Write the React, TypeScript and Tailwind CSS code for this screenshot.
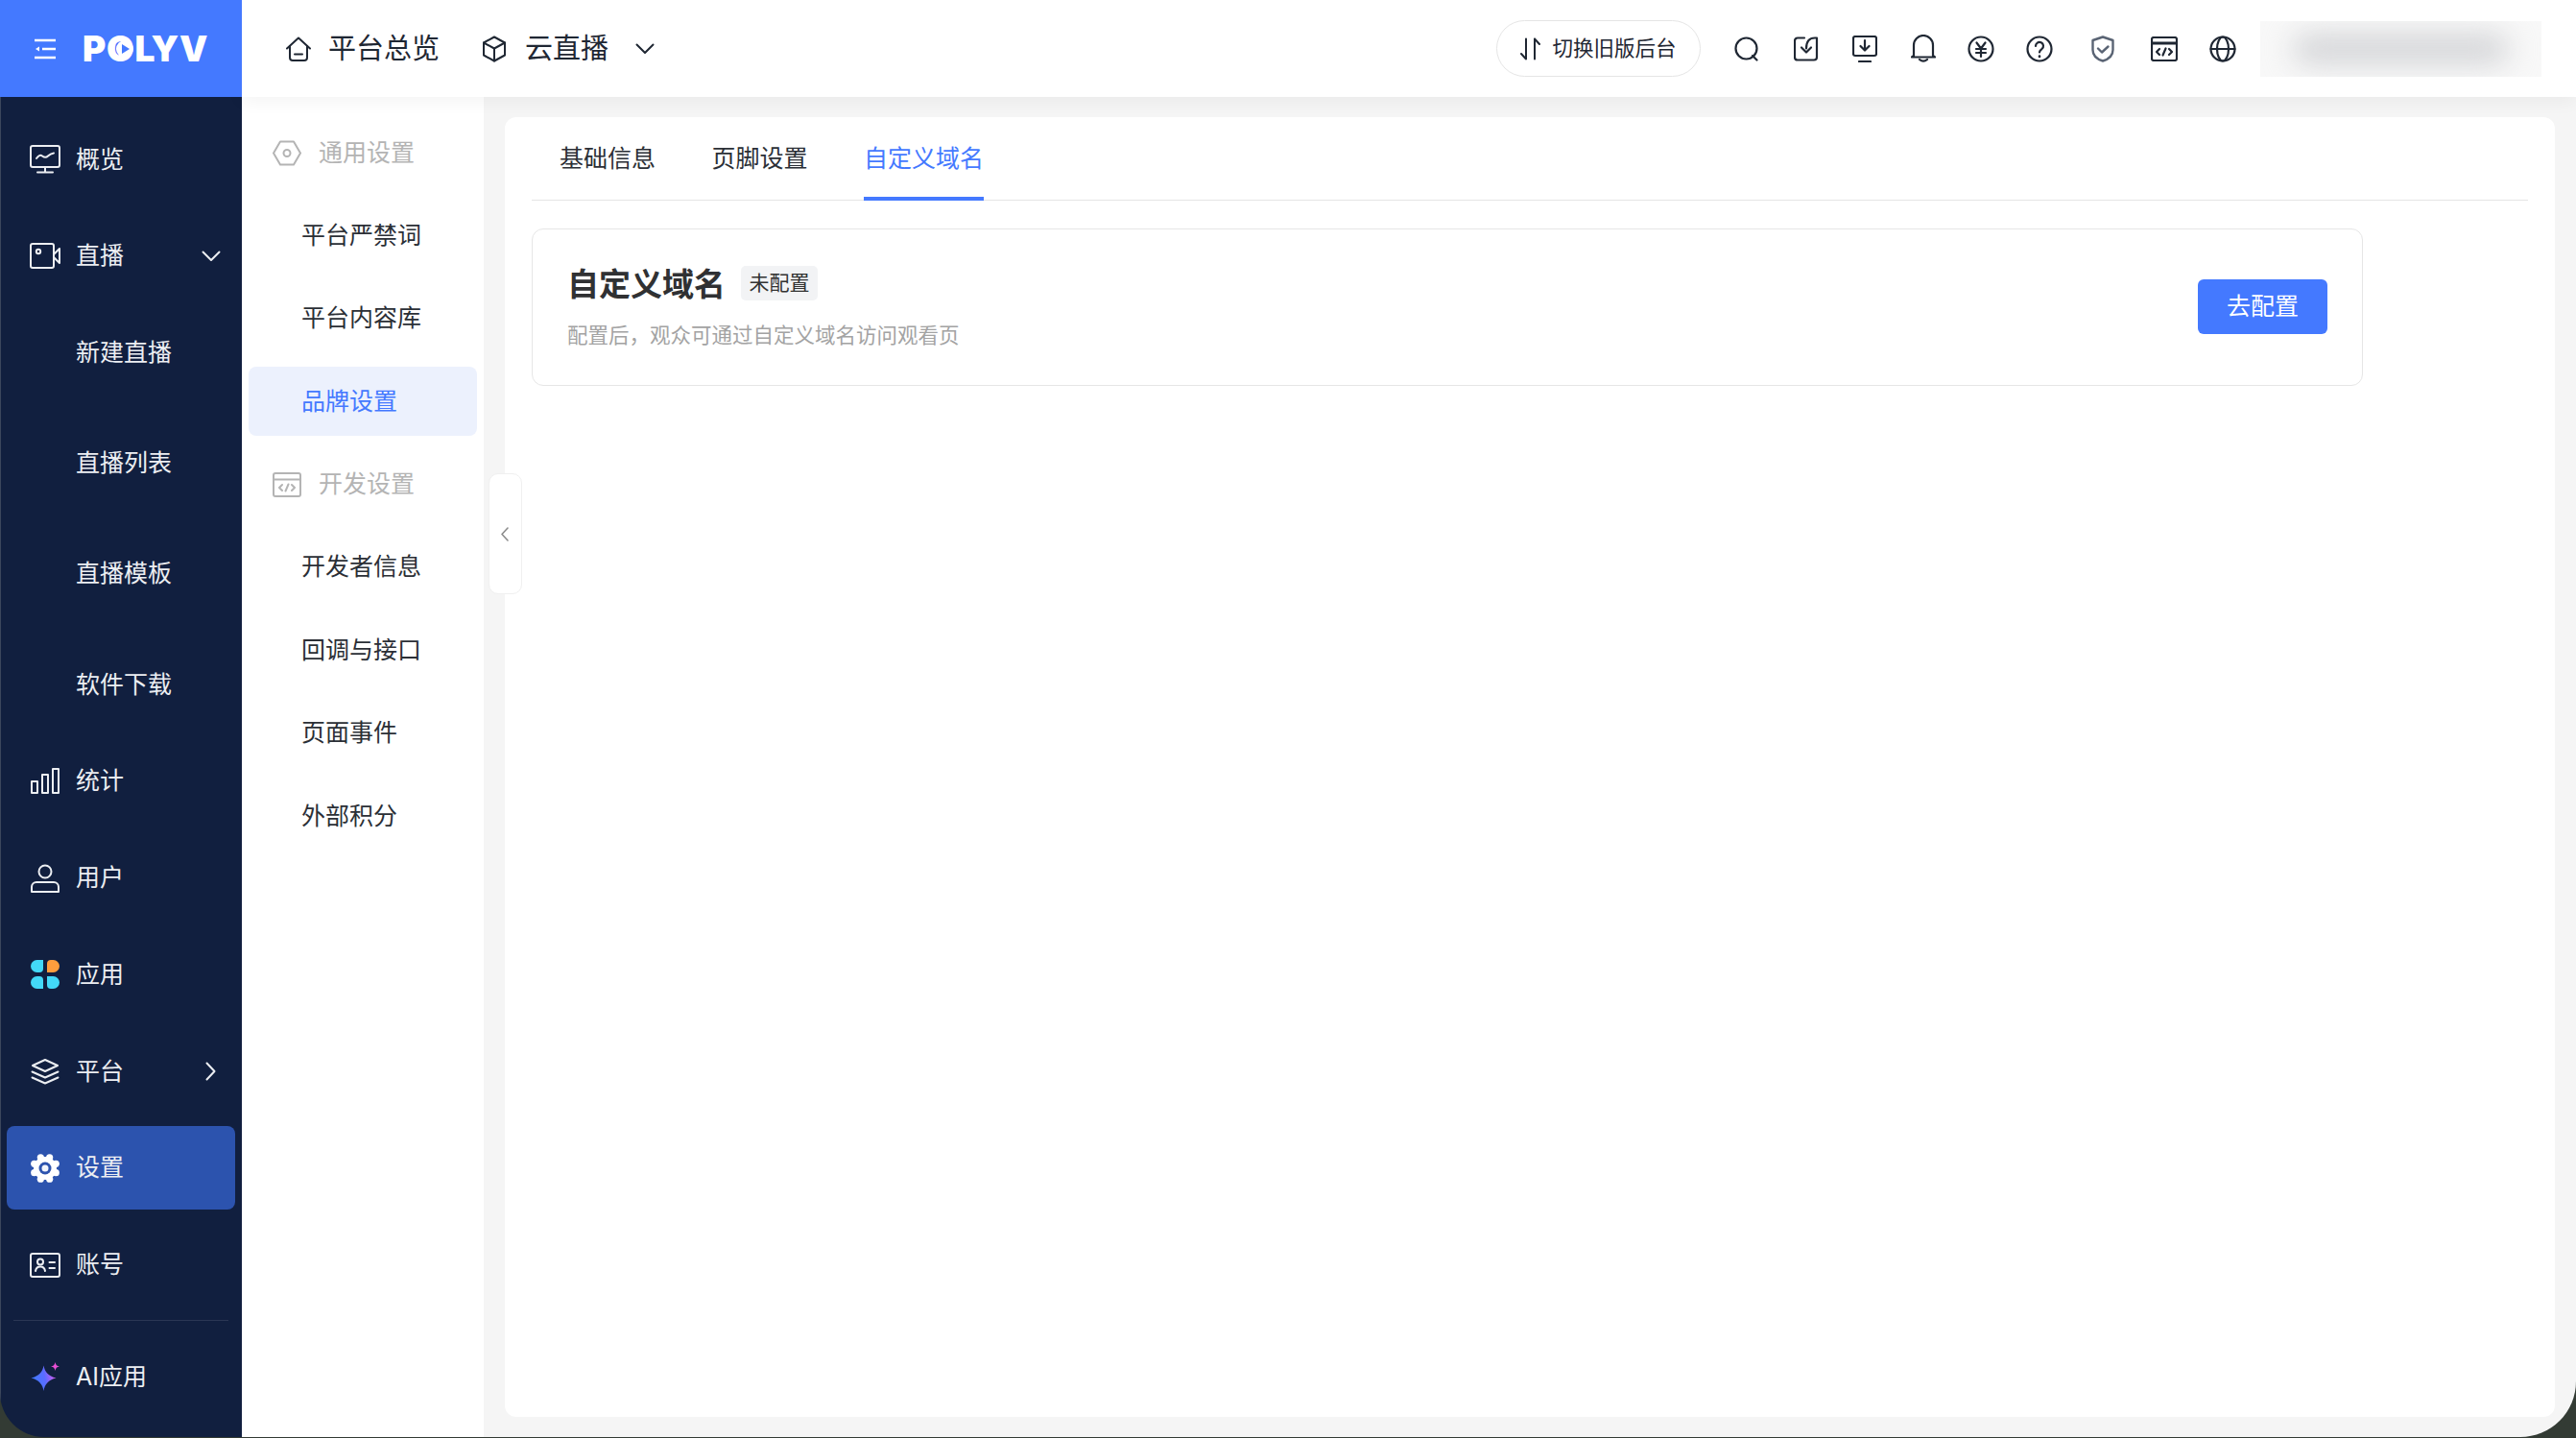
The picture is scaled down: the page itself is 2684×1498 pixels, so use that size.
import type { ReactNode } from 'react'

type IconProps = { w: number; h: number; className?: string; sw?: number; children: ReactNode }

// every icon is drawn in its own pixel box, so the viewBox is just the size
function Icon({ w, h, className, sw = 2, children }: IconProps) {
  return (
    <svg
      width={w}
      height={h}
      viewBox={`0 0 ${w} ${h}`}
      fill="none"
      stroke="currentColor"
      strokeWidth={sw}
      strokeLinecap="round"
      strokeLinejoin="round"
      className={className}
    >
      {children}
    </svg>
  )
}

const gearLobes = [0, 45, 90, 135, 180, 225, 270, 315]

const navIcons = {
  overview: (
    <Icon w={32} h={30}>
      <rect x="1" y="1" width="30" height="22" rx="2" />
      <path d="M7 14c2-3 4-4 6-2.500s4 2 6 0 3-2.500 6-3" />
      <path d="M16 23v5.500M8 28.500h16" />
    </Icon>
  ),
  live: (
    <Icon w={32} h={27}>
      <rect x="1" y="1" width="24" height="25" rx="2" />
      <circle cx="9" cy="9" r="2.200" />
      <path d="M25 12l6-6v15l-6-6" />
    </Icon>
  ),
  stats: (
    <Icon w={30} h={27}>
      <rect x="1" y="14" width="6" height="12" />
      <rect x="12" y="7" width="6" height="19" />
      <rect x="23" y="1" width="6" height="25" />
    </Icon>
  ),
  user: (
    <Icon w={30} h={30}>
      <circle cx="15" cy="8" r="6.500" />
      <path d="M1 29v-5a5 5 0 0 1 5-5h18a5 5 0 0 1 5 5v5z" />
    </Icon>
  ),
  apps: (
    <svg width="30" height="30" viewBox="0 0 30 30">
      <path d="M6.500 0H13v9a4 4 0 0 1-4 4H6.500a6.500 6.500 0 0 1 0-13z" fill="#43d8f7" />
      <path d="M17 4a4 4 0 0 1 4-4h2.500a6.500 6.500 0 0 1 0 13H17z" fill="#ff9d3d" />
      <path d="M6.500 30H13v-9a4 4 0 0 0-4-4H6.500a6.500 6.500 0 0 0 0 13z" fill="#43d8f7" />
      <path d="M23.500 30H21a4 4 0 0 1-4-4v-9h6.500a6.500 6.500 0 0 1 0 13z" fill="#43d8f7" />
    </svg>
  ),
  platform: (
    <Icon w={30} h={27}>
      <path d="M15 1l13 6-13 6-13-6z" />
      <path d="M1.500 13.500L15 19.500l13.500-6" />
      <path d="M1.500 19.500L15 25.500l13.500-6" />
    </Icon>
  ),
  settings: (
    <svg width="32" height="32" viewBox="0 0 32 32" fill="#fff">
      <circle cx="16" cy="16" r="12" />
      {gearLobes.map((deg) => (
        <circle
          key={deg}
          cx={16 + 12.2 * Math.cos(((deg + 22.5) * Math.PI) / 180)}
          cy={16 + 12.2 * Math.sin(((deg + 22.5) * Math.PI) / 180)}
          r="3.600"
        />
      ))}
      <circle cx="16" cy="16" r="6.500" fill="#2c53ae" />
      <circle cx="16" cy="16" r="3.500" fill="#f2f5fc" />
    </svg>
  ),
  account: (
    <Icon w={32} h={26}>
      <rect x="1" y="1" width="30" height="24" rx="2" />
      <circle cx="11" cy="9.500" r="3" />
      <path d="M6 19c.5-3 2.500-4.500 5-4.500s4.500 1.500 5 4.500" />
      <path d="M20.500 10H26M20.500 16H26" />
    </Icon>
  ),
  ai: (
    <svg width="30" height="30" viewBox="0 0 30 30">
      <defs>
        <linearGradient id="aiStar" x1="0" y1="0.6" x2="1" y2="0.4">
          <stop offset="0" stopColor="#3d7bff" />
          <stop offset="0.55" stopColor="#5a6cff" />
          <stop offset="1" stopColor="#e05bf0" />
        </linearGradient>
      </defs>
      <path
        d="M13.500 3.500C14.500 10 18.500 14.500 26.500 16.500 18.500 18.500 14.500 23 13.500 30 12.500 23 8.500 18.500 .5 16.500 8.500 14.500 12.500 10 13.500 3.500z"
        fill="url(#aiStar)"
      />
      <path
        d="M25.500 0c.5 2.900 1.700 4 4.500 4.500-2.800.5-4 1.600-4.500 4.500-.5-2.900-1.700-4-4.500-4.500 2.800-.5 4-1.600 4.500-4.500z"
        fill="#ea4fd6"
      />
    </svg>
  ),
}

const ChevronDown = ({ className }: { className?: string }) => (
  <Icon w={20} h={12} className={className}>
    <path d="M1.500 1.500L10 10l8.500-8.500" />
  </Icon>
)

function NavRow({ icon, label, children, active }: { icon?: ReactNode; label: string; children?: ReactNode; active?: boolean }) {
  return (
    <div
      className={`flex h-[87px] shrink-0 items-center rounded-lg pl-[24px] pr-[15px] ${active ? 'bg-[#2c53ae]' : ''}`}
    >
      <span className="flex w-8 shrink-0 justify-center">{icon}</span>
      <span className="ml-[16px] flex-1 text-[25px] leading-none">{label}</span>
      {children}
    </div>
  )
}

function Sidebar() {
  return (
    <aside className="flex w-[252px] shrink-0 flex-col border-l border-[#3b465c] bg-[#111f3f] text-[#eceef2]">
      <div className="relative z-20 -ml-px flex h-[101px] shrink-0 items-center bg-[#4479ff] text-white">
        <Icon w={24} h={22} className="ml-[35px]" sw={2.500}>
          <path d="M1 2h22M9 11h14M1 20h22" strokeLinecap="butt" />
          <path d="M6 8.500v5L2 11z" fill="currentColor" stroke="none" />
        </Icon>
        <span className="relative ml-[27px] font-['Inter',sans-serif] text-[37px] leading-none font-black tracking-[0.8px]">
          POLYV
          <svg width="24" height="18" viewBox="0 0 24 18" className="absolute top-[10px] left-[32px]">
            <circle cx="12" cy="9" r="9" fill="#fff" />
            <path d="M9 4l8 5-8 5z" fill="#4479ff" />
          </svg>
        </span>
      </div>
      <nav className="flex flex-1 flex-col gap-[13.75px] pt-[21.500px] pr-[7px] pl-[6px]">
        <NavRow icon={navIcons.overview} label="概览" />
        <NavRow icon={navIcons.live} label="直播">
          <ChevronDown />
        </NavRow>
        <div className="flex flex-col gap-[28.2px]">
          {['新建直播', '直播列表', '直播模板', '软件下载'].map((label) => (
            <NavRow key={label} label={label} />
          ))}
        </div>
        <NavRow icon={navIcons.stats} label="统计" />
        <NavRow icon={navIcons.user} label="用户" />
        <NavRow icon={navIcons.apps} label="应用" />
        <NavRow icon={navIcons.platform} label="平台">
          <Icon w={11} h={20} className="mr-[5px]">
            <path d="M1.500 1.500L9.500 10l-8 8.500" />
          </Icon>
        </NavRow>
        <NavRow icon={navIcons.settings} label="设置" active />
        <NavRow icon={navIcons.account} label="账号" />
        <div className="mx-[7px] my-[0.5px] h-px bg-[#2a3654]" />
        <NavRow icon={navIcons.ai} label="AI应用" />
      </nav>
    </aside>
  )
}

function TopBar() {
  return (
    <header className="relative z-10 flex h-[101px] shrink-0 items-center bg-white pr-[36px] pl-[46px] text-[#1f2733] shadow-[0_4px_18px_rgba(0,0,0,0.05)]">
      <Icon w={26} h={26}>
        <path d="M1 12.500L13 1.500l12 11" />
        <path d="M4 10v12a3 3 0 0 0 3 3h12a3 3 0 0 0 3-3V10" />
        <path d="M9 18.500h8" />
      </Icon>
      <span className="ml-[18px] text-[29px] leading-none">平台总览</span>
      <Icon w={26} h={28} className="ml-[44px]">
        <path d="M13 1.500l11 6v13l-11 6-11-6v-13z" />
        <path d="M2 7.500l11 6 11-6M13 13.500v13" />
      </Icon>
      <span className="ml-[19px] text-[29px] leading-none">云直播</span>
      <ChevronDown className="ml-[28px]" />

      <div className="ml-auto flex h-[59px] w-[213px] items-center rounded-full border border-[#e5e5e5] pl-[24px]">
        <Icon w={22} h={24}>
          <path d="M6 1.500v21M1 17l5 5.500M15 22.500V1.500M15 1.500l5 5.500" />
        </Icon>
        <span className="ml-[12px] text-[21.500px] leading-none">切换旧版后台</span>
      </div>

      <div className="ml-[35px] flex items-center text-[#1f2733]">
        <Icon w={26} h={26} sw={2.200}>
          <circle cx="12.500" cy="12.500" r="11" />
          <path d="M19 20l4.500 4.500" />
        </Icon>
        <Icon w={26} h={26} className="ml-[36px]" sw={2.200}>
          <path d="M11 1.500H4a3 3 0 0 0-3 3v17a3 3 0 0 0 3 3h17a3 3 0 0 0 3-3v-20h-2c-6 0-9 4-9 11" />
          <path d="M8 11.500l5 5 5-5" />
        </Icon>
        <Icon w={26} h={28} className="ml-[35px]" sw={2.200}>
          <rect x="1" y="1" width="24" height="20" rx="2" />
          <path d="M13 5v10M8.500 11l4.500 4.500 4.500-4.500M7 27h12" />
        </Icon>
        <Icon w={26} h={29} className="ml-[35px]" sw={2.200}>
          <path d="M3 22V11a10 10 0 0 1 20 0v11l2 1.500H1z" />
          <path d="M9 26c2.500 2 5.500 2 8 0" />
        </Icon>
        <Icon w={28} h={28} className="ml-[33.500px]" sw={2.200}>
          <circle cx="14" cy="14" r="12.500" />
          <path d="M9.500 7.500l4.500 6 4.500-6M9 14h10M9 18h10M14 13.500V22" />
        </Icon>
        <Icon w={28} h={28} className="ml-[33px]" sw={2.200}>
          <circle cx="14" cy="14" r="12.500" />
          <path d="M10 11a4 4 0 1 1 6.500 3c-1.500 1.200-2.500 1.800-2.500 3.500" />
          <path d="M14 21.500v.5" strokeWidth="2.600" />
        </Icon>
        <Icon w={24} h={28} className="ml-[40px] text-[#5a6474]" sw={2.400}>
          <path d="M12 1.500l10.500 3.500v10c0 5.500-4 9.500-10.500 11.500C5.500 24.500 1.500 20.500 1.500 15V5z" />
          <path d="M7 13.500l4 4 6.500-6" />
        </Icon>
        <Icon w={28} h={26} className="ml-[38px]" sw={2.200}>
          <rect x="1" y="1" width="26" height="24" rx="2" />
          <path d="M1 7h26" strokeWidth="3" />
          <path d="M9 13l-3 3 3 3M19 13l3 3-3 3M15.500 12.500l-3 7" />
        </Icon>
        <Icon w={28} h={28} className="ml-[33px]" sw={2.200}>
          <circle cx="14" cy="14" r="12.500" />
          <ellipse cx="14" cy="14" rx="6" ry="12.500" />
          <path d="M1.500 14h25" />
        </Icon>
      </div>

      {/* account name is blurred out in the source */}
      <div className="relative ml-[25px] h-[58px] w-[293px] overflow-hidden bg-[#f8f8f8]">
        <div className="absolute inset-x-[34px] inset-y-[14px] rounded-full bg-[#d2d3d6] blur-[15px]" />
      </div>
    </header>
  )
}

function SettingsMenu() {
  const Group = ({ icon, label }: { icon: ReactNode; label: string }) => (
    <div className="flex h-[72px] items-center pl-[25px] text-[#b4b4b4]">
      <span className="flex w-[30px] justify-center">{icon}</span>
      <span className="ml-[18px] text-[25px] leading-none">{label}</span>
    </div>
  )
  const Item = ({ label, active }: { label: string; active?: boolean }) => (
    <div
      className={`flex h-[72px] items-center rounded-lg pl-[55px] text-[25px] leading-none ${
        active ? 'bg-[#ecf1fd] text-[#4479ff]' : 'text-[#2b2f36]'
      }`}
    >
      {label}
    </div>
  )
  return (
    <div className="flex w-[252px] shrink-0 flex-col gap-[14.4px] bg-white px-[7px] pt-[22px]">
      <Group
        label="通用设置"
        icon={
          <Icon w={30} h={27}>
            <path d="M8 1.500h14l7 12-7 12H8l-7-12z" />
            <circle cx="15" cy="13.500" r="3.500" />
          </Icon>
        }
      />
      <Item label="平台严禁词" />
      <Item label="平台内容库" />
      <Item label="品牌设置" active />
      <Group
        label="开发设置"
        icon={
          <Icon w={30} h={26}>
            <rect x="1" y="1" width="28" height="24" rx="2" />
            <path d="M1 7.500h28" />
            <path d="M10 13l-3 3 3 3M20 13l3 3-3 3M16.500 12.500l-3 7" />
          </Icon>
        }
      />
      <Item label="开发者信息" />
      <Item label="回调与接口" />
      <Item label="页面事件" />
      <Item label="外部积分" />
    </div>
  )
}

function Content() {
  return (
    <main className="relative min-w-0 flex-1 bg-[#f5f5f5] pt-[21px] pr-[22px] pb-[21px] pl-[22px]">
      {/* collapse handle sits across the gutter */}
      <div className="absolute top-[392px] left-[5px] z-10 flex h-[126px] w-[35px] items-center justify-center rounded-[10px] border border-[#f0f0f0] bg-white pr-[2px] text-[#8c8c8c]">
        <Icon w={8} h={15} sw={1.600}>
          <path d="M7 1L1 7.500 7 14" />
        </Icon>
      </div>
      <div className="h-full rounded-[12px] bg-white px-[28px]">
        <div className="flex h-[87px] items-stretch gap-[58.500px] border-b border-[#e5e5e5] pl-[29px] text-[25px] leading-none text-[#2b2f36]">
          <span className="flex items-center pt-px">基础信息</span>
          <span className="flex items-center pt-px">页脚设置</span>
          <span className="-mb-px flex items-center border-b-4 border-[#4479ff] pt-[3px] text-[#4479ff]">自定义域名</span>
        </div>
        <section className="mt-[29px] flex h-[164px] w-[1908px] items-center justify-between rounded-[12px] border border-[#e6e6e6] pr-[36px] pl-[36px]">
          <div>
            <div className="flex items-center">
              <h2 className="text-[33px] leading-none font-bold text-[#303133]">自定义域名</h2>
              <span className="ml-[16px] -mt-[2px] flex h-[36px] w-[80px] items-center justify-center rounded-[5px] bg-[#f2f3f5] pb-[2px] text-[21px] leading-none text-[#333]">
                未配置
              </span>
            </div>
            <p className="mt-[26px] text-[21.500px] leading-none text-[#a3a3a3]">配置后，观众可通过自定义域名访问观看页</p>
          </div>
          <button
            type="button"
            className="-mt-[2px] h-[57px] w-[135px] rounded-[6px] bg-[#4479ff] pt-px text-[25px] leading-none text-white"
          >
            去配置
          </button>
        </section>
      </div>
    </main>
  )
}

export default function App() {
  return (
    <div className="h-[1498px] w-[2684px] overflow-hidden bg-[#333b34] font-['Inter','Noto_Sans_CJK_SC',sans-serif]">
      <div className="flex h-[1497px] overflow-hidden rounded-br-[58px] rounded-bl-[46px]">
        <Sidebar />
        <div className="flex min-w-0 flex-1 flex-col">
          <TopBar />
          <div className="flex min-h-0 flex-1">
            <SettingsMenu />
            <Content />
          </div>
        </div>
      </div>
    </div>
  )
}
